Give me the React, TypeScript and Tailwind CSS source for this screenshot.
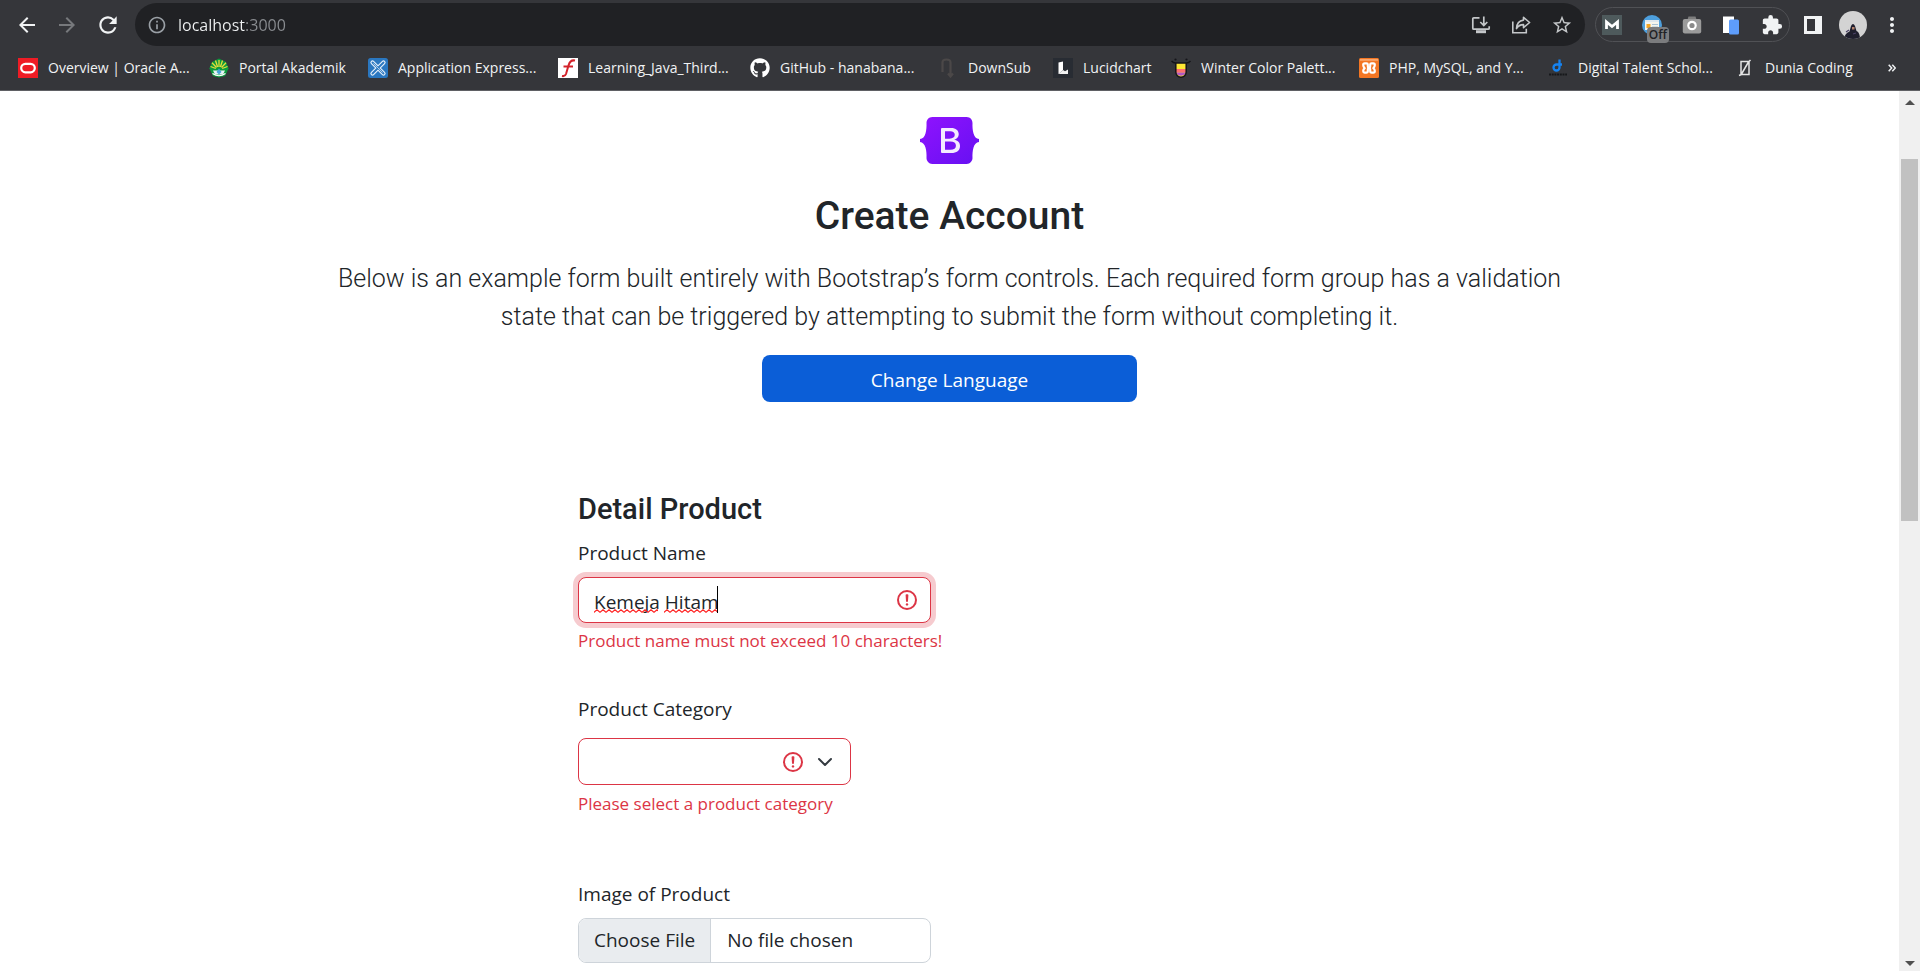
import React, { useState } from "react";
import { MdArrowBack, MdArrowForward, MdRefresh, MdOutlineInfo, MdStarBorder, MdExtension, MdMoreVert } from "react-icons/md";
import { FaGithub } from "react-icons/fa";

function OracleIcon() {
  return (
    <svg viewBox="0 0 20 20" className="size-5">
      <rect width="20" height="20" fill="#ee1c25" />
      <rect x="3.2" y="5.9" width="13.6" height="8.4" rx="4.2" fill="none" stroke="#fff" strokeWidth="2.2" />
    </svg>
  );
}

function CampusIcon() {
  return (
    <svg viewBox="0 0 20 20" className="size-5">
      <path d="M10 .6 17 4l2.600 6.500L16 18l-6 1.600L4 18 .4 10.500 3 4z" fill="#0b9a3c" />
      <path d="M10 9V2M8.600 9 6.500 2.500M11.400 9l2.100-6.500M7.500 9.500 3 4.800M12.500 9.500 17 4.800M6.800 10.500 1.500 8.500M13.200 10.500l5.300-2" stroke="#e6dc3a" strokeWidth="1.300" />
      <path d="M4 12.500h12l-2 4H6z" fill="#e9f3f5" />
      <path d="M10 10.500 12.500 14 10 16.500 7.500 14z" fill="#46a5d8" />
      <path d="M3.500 15.500q6.500 4.500 13 0" fill="none" stroke="#fff" strokeWidth="1.200" />
    </svg>
  );
}

function ExpressIcon() {
  return (
    <svg viewBox="0 0 20 20" className="size-5">
      <rect width="20" height="20" rx="2.500" fill="#2a77c0" />
      <path d="M4.500 4.500 15.500 15.500M15.500 4.500 4.500 15.500" stroke="#e8f1fa" strokeWidth="4.200" strokeLinecap="round" />
      <path d="M4.500 4.500 15.500 15.500M15.500 4.500 4.500 15.500" stroke="#2a77c0" strokeWidth="1.900" strokeLinecap="round" />
      <path d="M5.500 5.500 14.500 14.500" stroke="#e8f1fa" strokeWidth=".7" />
    </svg>
  );
}

function FlashIcon() {
  return (
    <svg viewBox="0 0 20 20" className="size-5">
      <rect width="20" height="20" fill="#fff" />
      <path d="M17 2.500c-4-.8-5.500 1.500-6.500 5L8 16c-.5 1.500-1.500 2.500-4 2M5.500 8.500h9.500" fill="none" stroke="#d3222a" strokeWidth="2" />
    </svg>
  );
}

function DownSubIcon() {
  return (
    <svg viewBox="0 0 20 20" className="size-5">
      <path d="M4.500 14V4.500q0-3 4-3t4 3V17M10 15.500l2.500 3 2.500-3" fill="none" stroke="#4b4848" strokeWidth="2.200" />
    </svg>
  );
}

function LucidIcon() {
  return (
    <svg viewBox="0 0 20 20" className="size-5">
      <rect width="20" height="20" fill="#282c33" />
      <path d="m5.500 4.500 4.500-1v8.500l-4.500 4z" fill="#fff" />
      <path d="M5.500 16 10 12l2 1.200 3-1.700V16z" fill="#f3f3f3" />
    </svg>
  );
}

function PaletteIcon() {
  return (
    <svg viewBox="0 0 20 20" className="size-5">
      <path d="M5 5h10v9a5 5 0 0 1-10 0z" fill="#ffe733" />
      <path d="M5 11h10v3.500H5z" fill="#ff6f6f" />
      <path d="M5.300 14.500h9.400A5 5 0 0 1 5.300 14.500z" fill="#b257c4" />
      <path d="M.5 3Q2.500 5.200 5 5h10q2.500.2 4.500-2M4.800 5v9a5.200 5.200 0 0 0 10.400 0V5" fill="none" stroke="#15151a" strokeWidth="1.500" />
      <circle cx="4.500" cy="1.500" r="1.100" fill="#15151a" />
      <circle cx="15.500" cy="1.500" r="1.100" fill="#15151a" />
    </svg>
  );
}

function XamppIcon() {
  return (
    <svg viewBox="0 0 20 20" className="size-5">
      <rect width="20" height="20" rx="1.500" fill="#f37623" />
      <path d="M1 1h18v1.800H1z" fill="#f9a76d" />
      <path d="M8.800 7.800V6.600Q8.800 5.300 7.500 5.300H5.700Q4.200 5.300 4.200 7T5.700 10.200Q4.200 11.500 4.200 13t1.500 1.700h1.600Q8.800 14.700 8.800 13v-1.200q0-1.600 1.200-1.600t1.200 1.600V13q0 1.700 1.500 1.700h1.600q1.500 0 1.500-1.700t-1.500-2.800q1.500-1.500 1.500-3.200t-1.500-1.700h-1.800q-1.300 0-1.300 1.300v1.200q0 2.400-1.200 2.400T8.800 7.800z" fill="none" stroke="#fff" strokeWidth="2.200" strokeLinejoin="round" />
    </svg>
  );
}

function DigitalentIcon() {
  return (
    <svg viewBox="0 0 20 20" className="size-5">
      <path d="M11.500 1.500V9.500a3 3 0 1 1-3-3H14" fill="none" stroke="#1683f0" strokeWidth="2.300" />
      <path d="M1 16.500h18" stroke="#17181b" strokeWidth="2.200" strokeDasharray="2 .7" />
    </svg>
  );
}

function DuniaIcon() {
  return (
    <svg viewBox="0 0 20 20" className="size-5">
      <path d="M6 3.500h8v13H6zM13.500 4 6.500 16M4 17.500l2.500-1M13.500 4 15.500 2" fill="none" stroke="#e4e4e4" strokeWidth="1.500" />
    </svg>
  );
}

const bookmarks = [
  { title: "Overview | Oracle A...", icon: <OracleIcon />, width: "w-[191px]" },
  { title: "Portal Akademik", icon: <CampusIcon />, width: "w-[159px]" },
  { title: "Application Express...", icon: <ExpressIcon />, width: "w-[190px]" },
  { title: "Learning_Java_Third...", icon: <FlashIcon />, width: "w-[192px]" },
  { title: "GitHub - hanabana...", icon: <FaGithub className="size-5 text-white" />, width: "w-[188px]" },
  { title: "DownSub", icon: <DownSubIcon />, width: "w-[115px]" },
  { title: "Lucidchart", icon: <LucidIcon />, width: "w-[118px]" },
  { title: "Winter Color Palett...", icon: <PaletteIcon />, width: "w-[188px]" },
  { title: "PHP, MySQL, and Y...", icon: <XamppIcon />, width: "w-[189px]" },
  { title: "Digital Talent Schol...", icon: <DigitalentIcon />, width: "w-[187px]" },
  { title: "Dunia Coding", icon: <DuniaIcon />, width: "w-[140px]" },
];

function Toolbar() {
  const [address, setAddress] = useState("localhost:3000");
  return (
    <div className="flex h-[46px] items-center pt-[3px] text-[#f1f3f4]">
      <div className="flex w-[135px] shrink-0 items-center gap-4 pl-[15px]">
        <button aria-label="Back"><MdArrowBack className="size-6" /></button>
        <button aria-label="Forward" className="text-[#77797c]"><MdArrowForward className="size-6" /></button>
        <button aria-label="Reload"><MdRefresh className="size-[26px]" /></button>
      </div>
      <div className="flex h-[43px] flex-1 items-center rounded-full bg-[#202124] pl-3">
        <MdOutlineInfo className="size-5 text-[#9aa0a6]" />
        <input
          aria-label="Address"
          value={address}
          onChange={(e) => setAddress(e.target.value)}
          spellCheck={false}
          className="ml-[11px] h-6 min-w-0 flex-1 bg-[linear-gradient(90deg,#f1f3f4_67px,#8a8d91_67px)] bg-clip-text text-[16px] leading-6 text-transparent outline-none"
        />
        <div className="flex items-center gap-5 pr-3 text-[#c4c7c9]">
          <button aria-label="Install app">
            <svg viewBox="0 0 20 20" className="size-5" fill="none" stroke="currentColor" strokeWidth="1.700">
              <path d="M8.500 2.800H2.800q-1 0-1 1v9.400q0 1 1 1h14.400q1 0 1-1v-2M12.800 1.500v8.500M9.300 7l3.500 3.500L16.300 7" />
              <path d="M5 16.700h10" strokeWidth="3" />
            </svg>
          </button>
          <button aria-label="Share">
            <svg viewBox="0 0 20 20" className="size-5" fill="none" stroke="currentColor" strokeWidth="1.600">
              <path d="M1.800 6.500v11.300h13.500v-4" />
              <path d="M12.500 2.300 18.600 7.500l-6.100 5.200V9.600c-3.500 0-5.500 1.200-7 4 .2-4.500 2.500-8 7-8.500z" strokeLinejoin="round" />
            </svg>
          </button>
          <button aria-label="Bookmark this tab"><MdStarBorder className="size-[22px]" /></button>
        </div>
      </div>
      <div className="ml-[10px] flex h-[35px] w-[195px] shrink-0 items-center justify-between rounded-full border border-[#505155] pl-[6px] pr-[6px]">
        <button aria-label="M extension">
          <svg viewBox="0 0 20 20" className="size-5">
            <rect width="20" height="20" fill="#4e5a5c" />
            <path d="M4.500 14V7l5.500 4.500L15.500 7v7" fill="none" stroke="#fff" strokeWidth="2.800" />
          </svg>
        </button>
        <button className="relative" aria-label="Reader extension">
          <svg viewBox="0 0 20 20" className="size-5">
            <circle cx="10" cy="10" r="10" fill="#4d9fdd" />
            <rect x="3" y="5" width="14" height="10" fill="#f5f5ee" />
            <path d="M3 5h14v2H3z" fill="#dfe8ee" />
            <rect x="4.500" y="9" width="4" height="4" fill="#f6a623" />
            <path d="M10 9.500h6M10 12h6" stroke="#a9c3d5" strokeWidth="1" />
          </svg>
          <span className="absolute left-[5px] top-3 h-4 rounded-sm bg-[#7b7c7e] px-[2px] text-[12px] font-semibold leading-[15px] text-[#202124]">Off</span>
        </button>
        <button aria-label="Camera extension">
          <svg viewBox="0 0 20 20" className="size-5">
            <path d="M6.500 1.500h7l1 3H5.500z" fill="#7d7d7d" />
            <rect x=".8" y="4" width="18.400" height="14.500" rx="2" fill="#9b9b9b" />
            <circle cx="10" cy="10.500" r="3.700" fill="#8a8a8a" stroke="#fff" strokeWidth="2.200" />
          </svg>
        </button>
        <button aria-label="Pages extension">
          <svg viewBox="0 0 20 20" className="size-5">
            <path d="M2 1.500h11V18H2z" fill="#fff" />
            <rect x="8" y="4.500" width="10" height="15" rx="1.500" fill="#5e9dfb" />
          </svg>
        </button>
        <button aria-label="Extensions"><MdExtension className="size-[22px]" /></button>
      </div>
      <div className="flex w-[130px] shrink-0 items-center pl-[14px]">
        <button aria-label="Side panel">
          <svg viewBox="0 0 18 18" className="size-[18px]">
            <path d="M0 0h18v18H0zM3 3v12h8V3z" fill="currentColor" fillRule="evenodd" />
          </svg>
        </button>
        <button aria-label="Profile" className="ml-[17px]">
          <svg viewBox="0 0 28 28" className="size-7">
            <clipPath id="avatar"><circle cx="14" cy="14" r="14" /></clipPath>
            <g clipPath="url(#avatar)">
              <rect width="28" height="28" fill="#d3d3d3" />
              <path d="M5 28c.5-3.500 2-6 5.500-7.500L12 15q2-4 4 0l1.500 5c2.500 1 3.500 4 3.500 8z" fill="#1f1f2e" />
              <path d="M13 16h2.500v2.500H13z" fill="#b5826a" />
              <path d="m7 21 3-2M14 23l3-1" stroke="#4a4266" strokeWidth="1.200" />
            </g>
          </svg>
        </button>
        <button aria-label="Menu" className="ml-[13px]"><MdMoreVert className="size-6" /></button>
      </div>
    </div>
  );
}

function BookmarkBar() {
  return (
    <nav className="flex h-11 items-center pl-[18px] text-[14px] leading-5 text-[#f1f3f4]">
      {bookmarks.map((b) => (
        <a key={b.title} href="#" className={`flex shrink-0 items-center gap-[10px] whitespace-nowrap ${b.width}`}>
          {b.icon}
          <span>{b.title}</span>
        </a>
      ))}
      <button aria-label="More bookmarks" className="ml-auto pr-6">
        <svg viewBox="0 0 8 8" className="size-2" fill="none" stroke="currentColor" strokeWidth="1.500">
          <path d="m.7.7 3 3.300-3 3.300M4.300.7l3 3.300-3 3.300" />
        </svg>
      </button>
    </nav>
  );
}

function Scrollbar() {
  return (
    <div className="flex w-[21px] shrink-0 flex-col items-center justify-between bg-[#f0f0f0] pb-[5px] pt-[9px]" aria-hidden="true">
      <svg viewBox="0 0 10 5" className="h-[5px] w-[10px]"><path d="M5 0 10 5H0z" fill="#505050" /></svg>
      <div className="mb-auto mt-[54px] h-[362px] w-[17px] bg-[#c1c1c1]" />
      <svg viewBox="0 0 10 5" className="h-[5px] w-[10px]"><path d="M0 0H10L5 5z" fill="#505050" /></svg>
    </div>
  );
}

function BootstrapLogo() {
  return (
    <svg viewBox="0 0 118 94" className="h-[47px] w-[59px] shrink-0" role="img" aria-label="Bootstrap">
      <defs>
        <linearGradient id="brand" x1="0" y1="0" x2="1" y2="1">
          <stop stopColor="#9013fe" />
          <stop offset="1" stopColor="#6610f2" />
        </linearGradient>
      </defs>
      <rect x="36" y="18" width="50" height="58" fill="#f4eaff" />
      <path fill="url(#brand)" fillRule="evenodd" d="M24.509 0c-6.733 0-11.715 5.893-11.492 12.284.214 6.140-.064 14.092-2.066 20.577C8.943 39.365 5.547 43.485 0 44.014v5.972c5.547.529 8.943 4.649 10.951 11.153 2.002 6.485 2.280 14.437 2.066 20.577C12.794 88.106 17.776 94 24.510 94H93.500c6.733 0 11.714-5.893 11.491-12.284-.214-6.140.064-14.092 2.066-20.577 2.009-6.504 5.396-10.624 10.943-11.153v-5.972c-5.547-.529-8.934-4.649-10.943-11.153-2.002-6.484-2.280-14.437-2.066-20.577C105.214 5.894 100.233 0 93.500 0H24.508zM80 57.863C80 66.663 73.436 72 62.543 72H44a2 2 0 01-2-2V24a2 2 0 012-2h18.437c9.083 0 15.044 4.920 15.044 12.474 0 5.302-4.010 10.049-9.119 10.880v.277C75.317 46.394 80 51.210 80 57.863zM60.521 28.340H49.948v14.934h8.905c6.884 0 10.680-2.772 10.680-7.727 0-4.643-3.264-7.207-9.012-7.207zM49.948 49.200v16.458H60.910c7.167 0 10.964-2.876 10.964-8.281 0-5.406-3.903-8.178-11.425-8.178H49.948z" />
    </svg>
  );
}

function InvalidIcon() {
  return (
    <svg viewBox="0 0 12 12" className="size-6" fill="none" stroke="#dc3545">
      <circle cx="6" cy="6" r="4.500" />
      <path strokeLinejoin="round" d="M5.800 3.600h.4L6 6.500z" />
      <circle cx="6" cy="8.200" r=".6" fill="#dc3545" stroke="none" />
    </svg>
  );
}

function Squiggle({ className }: { className: string }) {
  return (
    <svg className={`h-1 ${className}`} fill="none" stroke="#f22" strokeWidth="1.200" aria-hidden="true">
      <defs>
        <pattern id="wave" width="6" height="4" patternUnits="userSpaceOnUse">
          <path d="M-1 4.200 0 3.200 3 .8 6 3.200 7 4.200" />
        </pattern>
      </defs>
      <rect width="100%" height="4" fill="url(#wave)" stroke="none" />
    </svg>
  );
}

export default function App() {
  const [name, setName] = useState("Kemeja Hitam");
  return (
    <div className="flex h-screen flex-col bg-white font-['Open_Sans','Noto_Sans',sans-serif] text-[#212529]">
      <header className="shrink-0 border-b border-[#5f6064] bg-[#35363a]">
        <Toolbar />
        <BookmarkBar />
      </header>
      <div className="flex min-h-0 flex-1">
        <main className="flex min-w-0 flex-1 flex-col items-center overflow-hidden pt-[26px]">
          <BootstrapLogo />
          <h2 className="mt-7 font-['Roboto',sans-serif] text-[39px] font-medium leading-[48px]">Create Account</h2>
          <p className="mt-5 max-w-[1290px] px-5 text-center font-['Roboto',sans-serif] text-[25px] font-light leading-[38px]">
            Below is an example form built entirely with Bootstrap’s form controls. Each required form group has a validation state that can be triggered by attempting to submit the form without completing it.
          </p>
          <button className="mt-[19px] h-[47px] w-[375px] shrink-0 rounded-lg bg-[#0b5ed7] pt-[2px] text-[19px] leading-[30px] text-white">Change Language</button>

          <form className="mt-[89px] flex w-full max-w-[743px] flex-col items-start text-[19px] leading-[30px]">
            <h4 className="font-['Roboto',sans-serif] text-[29px] font-medium leading-9">Detail Product</h4>

            <label htmlFor="name" className="mt-[11px]">Product Name</label>
            <div className="relative mt-[9px]">
              <input
                id="name"
                value={name}
                onChange={(e) => setName(e.target.value)}
                spellCheck={false}
                className="block h-[46px] w-[353px] rounded-lg border border-[#dc3545] bg-white pl-[15px] pr-12 pt-1 shadow-[0_0_0_5px_#f6cbcf] outline-none"
              />
              <Squiggle className="absolute left-4 top-8 w-16" />
              <Squiggle className="absolute left-[86px] top-8 w-[54px]" />
              <span className="absolute left-[139px] top-[9px] h-[27px] w-px bg-black" />
              <span className="absolute right-3 top-[11px]"><InvalidIcon /></span>
            </div>
            <p className="mt-1 text-[17px] leading-7 text-[#dc3545]">Product name must not exceed 10 characters!</p>

            <label htmlFor="category" className="mt-[39px]">Product Category</label>
            <div className="relative mt-[14px]">
              <select id="category" defaultValue="" className="block h-[47px] w-[273px] appearance-none rounded-lg border border-[#dc3545] bg-white px-4 outline-none">
                <option value=""></option>
              </select>
              <span className="pointer-events-none absolute right-[46px] top-3"><InvalidIcon /></span>
              <svg viewBox="0 0 16 16" className="pointer-events-none absolute right-[18px] top-4 size-4" fill="none" stroke="#343a40" strokeWidth="2" strokeLinecap="round" strokeLinejoin="round">
                <path d="m2 5 6 6 6-6" />
              </svg>
            </div>
            <p className="mt-[5px] text-[17px] leading-7 text-[#dc3545]">Please select a product category</p>

            <label htmlFor="image" className="mt-[61px]">Image of Product</label>
            <input
              id="image"
              type="file"
              className="mt-[9px] block h-[45px] w-[353px] rounded-lg border border-[#ced4da] bg-white leading-[43px] file:mr-4 file:h-[43px] file:rounded-l-[7px] file:rounded-r-none file:border-0 file:border-r file:border-solid file:border-[#ced4da] file:bg-[#e9ecef] file:px-[15px] file:text-[#212529]"
            />
          </form>
        </main>
        <Scrollbar />
      </div>
    </div>
  );
}
